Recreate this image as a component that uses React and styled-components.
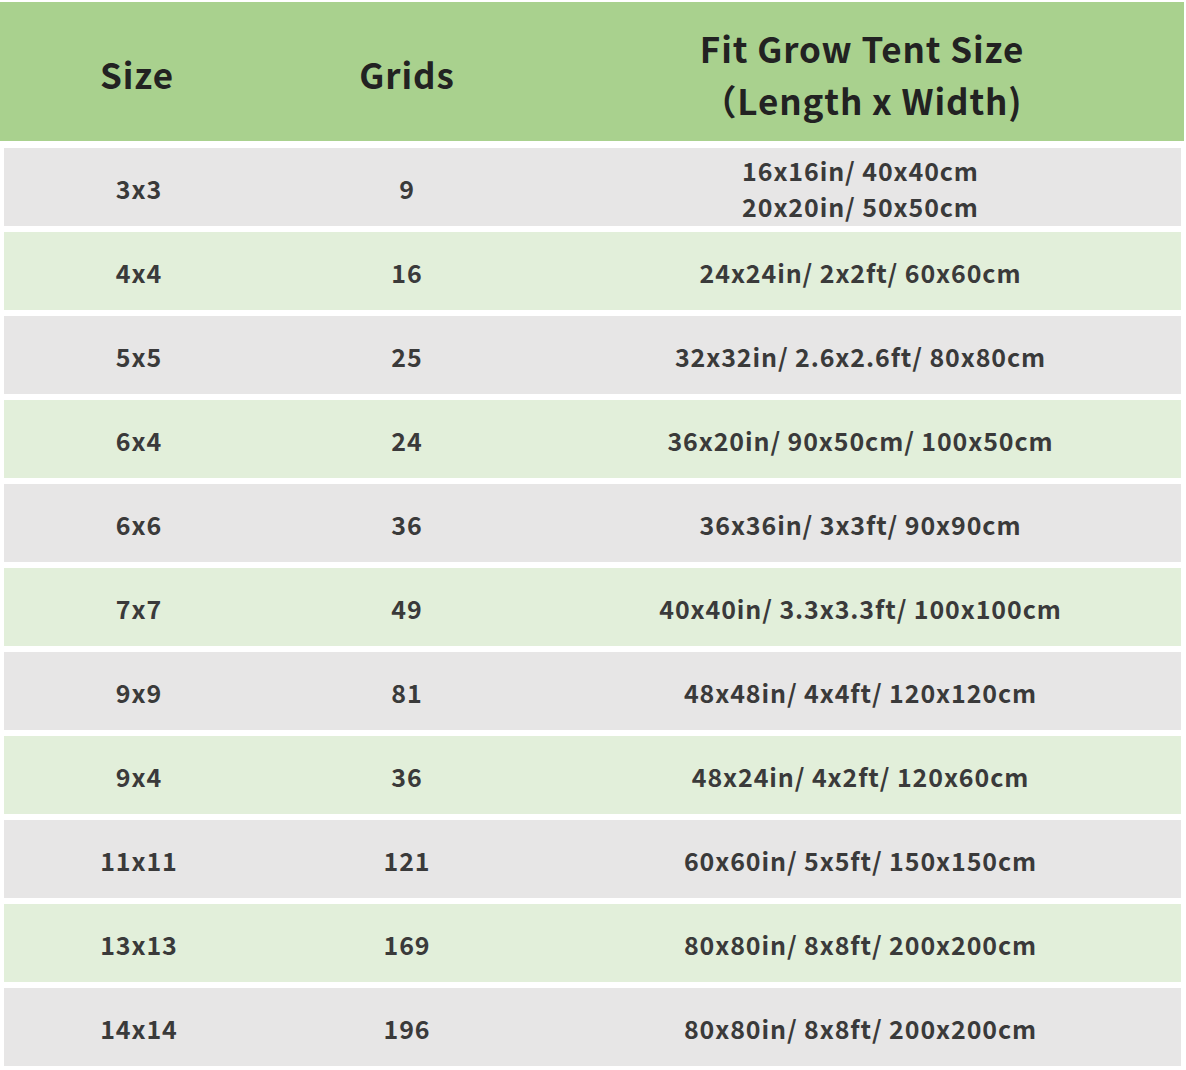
import React from 'react'
import styled, { createGlobalStyle } from 'styled-components'

const GlobalStyle = createGlobalStyle`
  html, body {
    margin: 0;
    padding: 0;
    background: #ffffff;
  }
  body {
    font-family: 'Noto Sans CJK SC', 'Noto Sans', sans-serif;
  }
`

const Table = styled.div`
  width: 1186px;
  padding-top: 2px;
  display: flex;
  flex-direction: column;
  gap: 6px;
`

const HeaderRow = styled.div`
  display: grid;
  grid-template-columns: 274px 266px 1fr;
  height: 139px;
  margin-right: 2px;
  margin-bottom: 1px;
  background: #a9d18e;
  color: #222222;
  font-size: 35px;
  font-weight: 700;
  line-height: 52px;
  letter-spacing: 0.9px;
`

const HeadCell = styled.div`
  display: flex;
  align-items: center;
  justify-content: center;
  text-align: center;
  padding-top: 4px;
`

const Row = styled.div`
  display: grid;
  grid-template-columns: 270px 266px 1fr;
  height: 78px;
  margin: 0 5px 0 4px;
  background: ${props => (props.alt ? '#e2efda' : '#e7e6e6')};
  color: #3a3a3a;
  font-size: 25px;
  font-weight: 700;
  line-height: 36px;
  letter-spacing: 0.9px;
`

const Cell = styled.div`
  display: flex;
  align-items: center;
  justify-content: center;
  text-align: center;
  padding-top: 1px;
`

const rows = [
  ['3x3', '9', ['16x16in/ 40x40cm', '20x20in/ 50x50cm']],
  ['4x4', '16', ['24x24in/ 2x2ft/ 60x60cm']],
  ['5x5', '25', ['32x32in/ 2.6x2.6ft/ 80x80cm']],
  ['6x4', '24', ['36x20in/ 90x50cm/ 100x50cm']],
  ['6x6', '36', ['36x36in/ 3x3ft/ 90x90cm']],
  ['7x7', '49', ['40x40in/ 3.3x3.3ft/ 100x100cm']],
  ['9x9', '81', ['48x48in/ 4x4ft/ 120x120cm']],
  ['9x4', '36', ['48x24in/ 4x2ft/ 120x60cm']],
  ['11x11', '121', ['60x60in/ 5x5ft/ 150x150cm']],
  ['13x13', '169', ['80x80in/ 8x8ft/ 200x200cm']],
  ['14x14', '196', ['80x80in/ 8x8ft/ 200x200cm']]
]

const App = () => (
  <>
    <GlobalStyle />
    <Table>
      <HeaderRow>
        <HeadCell>Size</HeadCell>
        <HeadCell>Grids</HeadCell>
        <HeadCell>
          <div>
            Fit Grow Tent Size
            <br />
            （Length x Width)
          </div>
        </HeadCell>
      </HeaderRow>
      {rows.map(([size, grids, fit], i) => (
        <Row key={size + i} alt={i % 2 === 1}>
          <Cell>{size}</Cell>
          <Cell>{grids}</Cell>
          <Cell>
            <div>
              {fit.map(line => (
                <div key={line}>{line}</div>
              ))}
            </div>
          </Cell>
        </Row>
      ))}
    </Table>
  </>
)

export default App
